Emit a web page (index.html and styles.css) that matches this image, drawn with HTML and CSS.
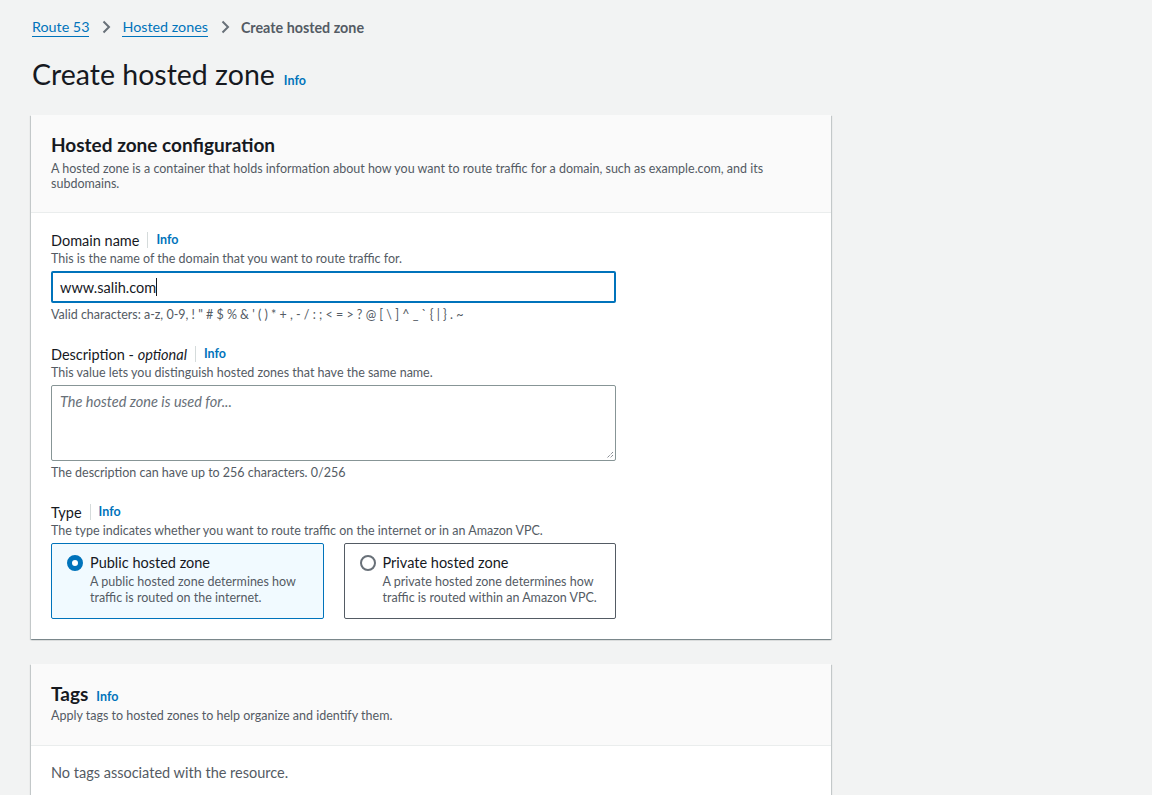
FILE: index.html
```html
<!DOCTYPE html>
<html lang="en">
<head>
<meta charset="utf-8">
<title>Create hosted zone</title>
<link rel="stylesheet" href="styles.css">
</head>
<body>
<div class="page">
  <nav class="breadcrumbs">
    <a class="crumb-link" href="#">Route 53</a>
    <svg class="chev" width="16" height="16" viewBox="0 0 16 16"><path d="M5.5 2.5 L11 8 L5.5 13.5" fill="none" stroke="#687078" stroke-width="2"/></svg>
    <a class="crumb-link" href="#">Hosted zones</a>
    <svg class="chev" width="16" height="16" viewBox="0 0 16 16"><path d="M5.5 2.5 L11 8 L5.5 13.5" fill="none" stroke="#687078" stroke-width="2"/></svg>
    <span class="crumb-current">Create hosted zone</span>
  </nav>

  <div class="page-header">
    <h1 class="page-title">Create hosted zone</h1>
    <a class="info" href="#">Info</a>
  </div>

  <section class="container">
    <div class="container-header">
      <h2 class="container-title">Hosted zone configuration</h2>
      <p class="container-desc">A hosted zone is a container that holds information about how you want to route traffic for a domain, such as example.com, and its subdomains.</p>
    </div>
    <div class="container-body">
      <div class="field">
        <div class="label-row">
          <span class="label">Domain name</span>
          <a class="info info-sep" href="#">Info</a>
        </div>
        <div class="field-desc">This is the name of the domain that you want to route traffic for.</div>
        <div class="input focused"><span>www.salih.com</span><span class="caret"></span></div>
        <div class="constraint">Valid characters: a-z, 0-9, ! " # $ % &amp; ' ( ) * + , - / : ; &lt; = &gt; ? @ [ \ ] ^ _ ` { | } . ~</div>
      </div>

      <div class="field">
        <div class="label-row">
          <span class="label">Description - <em>optional</em></span>
          <a class="info info-sep" href="#">Info</a>
        </div>
        <div class="field-desc">This value lets you distinguish hosted zones that have the same name.</div>
        <div class="textarea">
          <span class="placeholder">The hosted zone is used for...</span>
          <svg class="grip" width="10" height="10" viewBox="0 0 10 10"><path d="M9 3 L3 9 M9 6 L6 9" stroke="#545b64" stroke-width="1" stroke-dasharray="1 1" fill="none"/></svg>
        </div>
        <div class="constraint">The description can have up to 256 characters. 0/256</div>
      </div>

      <div class="field last">
        <div class="label-row">
          <span class="label">Type</span>
          <a class="info info-sep" href="#">Info</a>
        </div>
        <div class="field-desc">The type indicates whether you want to route traffic on the internet or in an Amazon VPC.</div>
        <div class="tiles">
          <div class="tile selected">
            <span class="radio checked"></span>
            <div class="tile-text">
              <div class="tile-label">Public hosted zone</div>
              <div class="tile-desc">A public hosted zone determines how traffic is routed on the internet.</div>
            </div>
          </div>
          <div class="tile">
            <span class="radio"></span>
            <div class="tile-text">
              <div class="tile-label">Private hosted zone</div>
              <div class="tile-desc">A private hosted zone determines how traffic is routed within an Amazon VPC.</div>
            </div>
          </div>
        </div>
      </div>
    </div>
  </section>

  <section class="container tags">
    <div class="container-header tags-header">
      <div class="tags-title-row">
        <h2 class="container-title">Tags</h2>
        <a class="info" href="#">Info</a>
      </div>
      <p class="container-desc">Apply tags to hosted zones to help organize and identify them.</p>
    </div>
    <div class="container-body tags-body">
      <p class="empty">No tags associated with the resource.</p>
    </div>
  </section>
</div>
</body>
</html>
```

FILE: styles.css
```css
* { box-sizing: border-box; }
html, body { margin: 0; padding: 0; }
body {
  background: #f2f3f3;
  font-family: Lato, "Open Sans", Arial, sans-serif;
  color: #16191f;
  height: 795px;
  overflow: hidden;
}
.page {
  padding: 16px 0 0 31px;
  width: 831px;
}
.breadcrumbs {
  display: flex;
  align-items: center;
  height: 22px;
  font-size: 14.3px;
  padding-left: 1px;
}
.crumb-link {
  color: #0073bb;
  text-decoration: none;
  border-bottom: 1px solid #0073bb;
  line-height: 18px;
}
.chev { margin: 0 8px 0 9px; }
.crumb-current { color: #545b64; font-weight: 700; }

.page-header {
  display: flex;
  align-items: baseline;
  gap: 9px;
  margin-top: 18px;
  padding-left: 1px;
}
.page-title {
  margin: 0;
  font-size: 28.5px;
  font-weight: 400;
  line-height: 36px;
}
.info {
  color: #0073bb;
  font-size: 12.5px;
  font-weight: 700;
  text-decoration: none;
}

.container {
  background: #fff;
  margin-top: 23px;
  width: 800px;
  box-shadow: 0 1px 1px 0 rgba(0,28,36,.3), 1px 1px 1px 0 rgba(0,28,36,.15), -1px 1px 1px 0 rgba(0,28,36,.15);
}
.container-header {
  background: #fafafa;
  border-bottom: 1px solid #eaeded;
  padding: 18px 20px 21px;
}
.container-title {
  margin: 0;
  font-size: 19px;
  font-weight: 700;
  line-height: 24px;
}
.container-desc {
  margin: 4px 0 0;
  font-size: 12.5px;
  line-height: 15px;
  color: #545b64;
  max-width: 740px;
}
.container-body {
  padding: 17px 20px 20px;
}
.field { width: 565px; margin-bottom: 21px; }
.field.last { margin-bottom: 0; }
.label-row { display: flex; align-items: center; height: 20px; }
.label { font-size: 14.5px; }
.label em { font-style: italic; }
.info-sep {
  margin-left: 8px;
  padding-left: 8px;
  border-left: 1px solid #d5dbdb;
  line-height: 16px;
}
.field-desc {
  font-size: 12.5px;
  color: #545b64;
  line-height: 16px;
  margin-top: 1px;
  margin-bottom: 4px;
}
.input {
  height: 32px;
  border: 2px solid #0073bb;
  border-radius: 2px;
  display: flex;
  align-items: center;
  padding-left: 7px;
  font-size: 14.5px;
}
.caret {
  display: inline-block;
  width: 1px;
  height: 18px;
  background: #16191f;
}
.constraint {
  font-size: 12.5px;
  color: #545b64;
  line-height: 16px;
  margin-top: 4px;
}
.textarea {
  position: relative;
  height: 76px;
  border: 1px solid #879596;
  border-radius: 2px;
  padding: 6px 8px;
  font-size: 14.5px;
  line-height: 20px;
}
.placeholder { color: #687078; font-style: italic; }
.grip { position: absolute; right: 1px; bottom: 1px; }

.tiles {
  display: flex;
  gap: 20px;
  margin-top: 4px;
}
.tile {
  flex: 1;
  height: 76px;
  border: 1px solid #545b64;
  border-radius: 2px;
  display: flex;
  gap: 8px;
  padding: 9px 16px 0 15px;
}
.tile.selected {
  border-color: #0073bb;
  background: #f1faff;
}
.radio {
  flex: none;
  width: 16px;
  height: 16px;
  border-radius: 50%;
  border: 2px solid #687078;
  background: #fff;
  margin-top: 2px;
}
.radio.checked {
  border: 5px solid #0073bb;
}
.tile-text { margin-left: -1px; }
.tile-label { font-size: 14.5px; line-height: 20px; }
.tile-desc { font-size: 12.5px; line-height: 16px; color: #545b64; margin-top: 1px; }

.tags { margin-top: 25px; }
.tags-header { padding: 18px 20px 21px; }
.tags-title-row { display: flex; align-items: baseline; gap: 8px; }
.tags-header .container-desc { margin-top: 2px; line-height: 16px; }
.tags-body { padding: 17px 20px 30px; }
.empty { margin: 0; font-size: 14.5px; line-height: 20px; color: #545b64; }
```
